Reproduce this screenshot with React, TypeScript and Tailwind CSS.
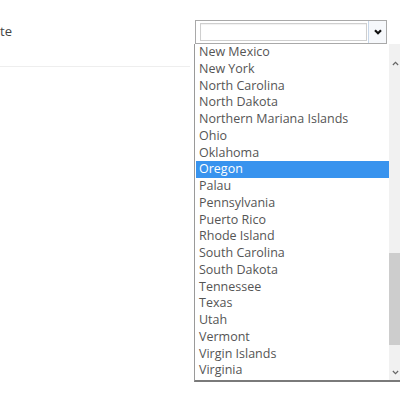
const states = [
  "New Mexico",
  "New York",
  "North Carolina",
  "North Dakota",
  "Northern Mariana Islands",
  "Ohio",
  "Oklahoma",
  "Oregon",
  "Palau",
  "Pennsylvania",
  "Puerto Rico",
  "Rhode Island",
  "South Carolina",
  "South Dakota",
  "Tennessee",
  "Texas",
  "Utah",
  "Vermont",
  "Virgin Islands",
  "Virginia",
];

const selected = "Oregon";

function Chevron({ up, className }: { up?: boolean; className?: string }) {
  return (
    <svg viewBox="0 0 8 5" className={className} fill="none" stroke="currentColor" strokeWidth={1.4}>
      <path d={up ? "M1 4.2L4 1.2L7 4.2" : "M1 0.8L4 3.8L7 0.8"} />
    </svg>
  );
}

export default function App() {
  return (
    <div className="w-[400px] h-[400px] overflow-hidden bg-white font-['Open_Sans',sans-serif] text-[#555]">
      <div className="flex pt-[20px]">
        {/* label column */}
        <div className="w-[194px] shrink-0 pr-[4px]">
          <div className="h-[23px] leading-[23px] text-[13px] text-[#444]">te</div>
          <div className="mt-[23px] h-px bg-[#eeeeee]" />
        </div>

        {/* select + open list */}
        <div className="flex flex-col shrink-0 w-[208px]">
          <div className="ml-[1px] flex h-[24px] w-[192px] border border-[#a9a9a9] bg-white">
            <div className="ml-[4px] mt-[2px] h-[18px] w-[167px] border border-[#cfcfcf] bg-white shadow-[inset_0_1px_1px_rgba(0,0,0,0.06)]" />
            <div className="ml-auto flex h-full w-[18px] items-center justify-center border-l border-[#c7d6e8] bg-[#f6f8fb]">
              <Chevron className="w-[8px] h-[6px] text-[#111] [stroke-width:2.2]" />
            </div>
          </div>

          <div className="flex h-[338px] border-l border-l-[#9a9a9a] border-b-2 border-b-[#7a7a7a] bg-white overflow-hidden">
            <div className="flex-1 flex flex-col pl-[1px]">
              {states.map((s) => (
                <div
                  key={s}
                  className={
                    s === selected
                      ? "h-[16.75px] shrink-0 leading-[16.75px] pl-[3px] text-[12.5px] bg-[#3893ee] text-white"
                      : "h-[16.75px] shrink-0 leading-[16.75px] pl-[3px] text-[12.5px]"
                  }
                >
                  {s}
                </div>
              ))}
            </div>

            {/* scrollbar */}
            <div className="w-[13px] shrink-0 flex flex-col bg-[#f1f1f1]">
              <div className="h-[17px] flex items-end justify-center pb-[1px] mt-[6px]">
                <Chevron up className="w-[7px] h-[5px] text-[#666]" />
              </div>
              <div className="mt-[186px] h-[92px] bg-[#cdcdcd]" />
              <div className="mt-auto h-[17px] flex items-start justify-center pt-[7px] pb-[3px]">
                <Chevron className="w-[7px] h-[5px] text-[#666]" />
              </div>
            </div>
          </div>
        </div>
      </div>
    </div>
  );
}
